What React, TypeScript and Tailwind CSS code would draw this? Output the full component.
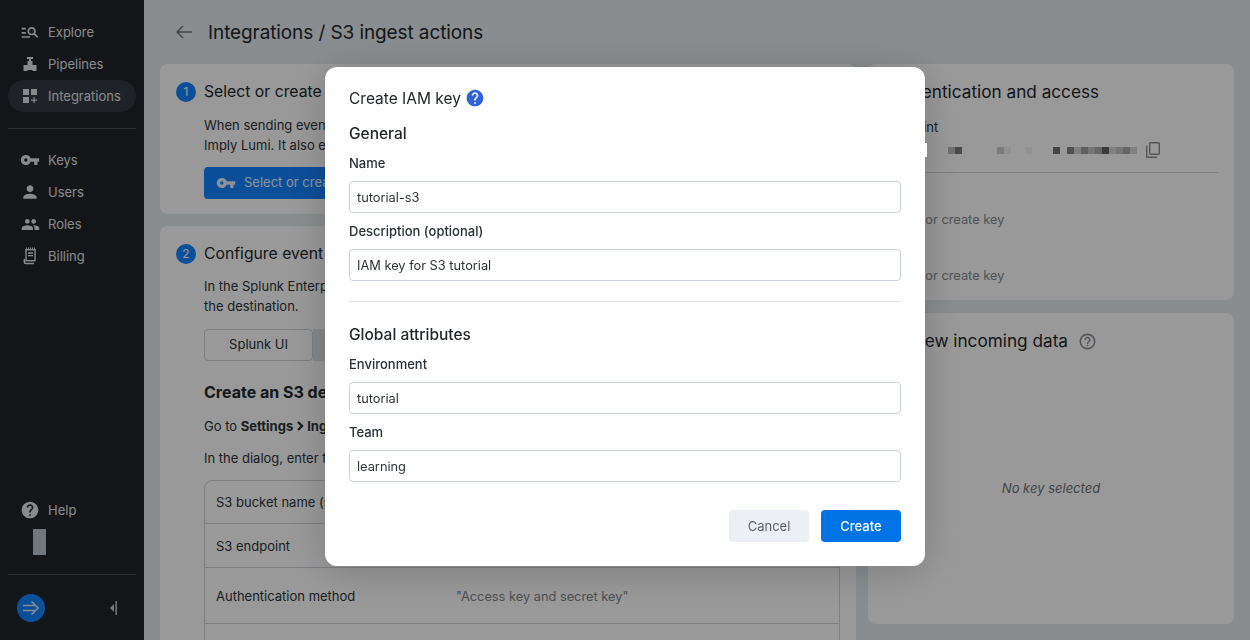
import React from 'react';
import { MdHelp, MdHelpOutline, MdManageSearch, MdPeople, MdPerson, MdVpnKey } from 'react-icons/md';

const PipelinesIcon = () => (
  <svg width="18" height="18" viewBox="0 0 18 18" fill="currentColor">
    <rect x="6" y="2" width="6" height="2" />
    <rect x="8" y="4" width="2" height="3" />
    <rect x="6.5" y="6" width="5" height="4.5" />
    <path d="M2.5 10h13v6h-13z" />
    <rect x="6.5" y="15" width="5" height="1" fill="#212429" />
  </svg>
);

const IntegrationsIcon = () => (
  <svg width="16" height="16" viewBox="0 0 16 16" fill="currentColor">
    <rect x="1" y="1" width="6" height="6" />
    <rect x="9" y="1" width="6" height="6" />
    <rect x="1" y="9" width="6" height="6" />
    <path d="M11.4 9h1.3v2.4H15v1.3h-2.3V15h-1.3v-2.3H9v-1.3h2.4z" />
  </svg>
);

const BillingIcon = () => (
  <svg width="14" height="18" viewBox="0 0 14 18" fill="none" stroke="currentColor">
    <path d="M3 1.2h9" strokeWidth="1.4" strokeDasharray="1 1" />
    <rect x="3" y="2.7" width="9" height="11" strokeWidth="1.4" />
    <path d="M5 6h5M5 8.6h5" strokeWidth="1.3" />
    <path d="M1.4 12v3.2q0 1.3 1.3 1.3H11" strokeWidth="1.6" />
  </svg>
);

const CopyIcon = () => (
  <svg width="14" height="16" viewBox="0 0 14 16" fill="none" stroke="currentColor" strokeWidth="1.4" className="text-[#8c9096]">
    <rect x="3.7" y="0.7" width="9.6" height="11.6" rx="1" />
    <path d="M0.7 3.5v11.8H11" />
  </svg>
);

const NavItem = ({ icon, label, active }: { icon: React.ReactNode; label: string; active?: boolean }) => (
  <div className={`h-8 rounded-2xl flex items-center pl-3 gap-2 ${active ? 'bg-[#343a40]' : ''}`}>
    <span className="w-5 h-5 flex items-center justify-center text-[#e2e5e8]">{icon}</span>
    <span className="pt-px text-[13px] text-[#e2e5e8]">{label}</span>
  </div>
);

const Sidebar = () => (
  <aside className="w-36 shrink-0 h-full bg-[#212429] flex flex-col px-2 pt-4">
    <NavItem icon={<MdManageSearch size={20} />} label="Explore" />
    <NavItem icon={<PipelinesIcon />} label="Pipelines" />
    <NavItem icon={<IntegrationsIcon />} label="Integrations" active />
    <div className="h-px bg-[#474e55] mt-4 mb-[15px]" />
    <NavItem icon={<MdVpnKey size={20} />} label="Keys" />
    <NavItem icon={<MdPerson size={20} />} label="Users" />
    <NavItem icon={<MdPeople size={19} />} label="Roles" />
    <NavItem icon={<BillingIcon />} label="Billing" />
    <div className="flex-1" />
    <NavItem icon={<MdHelp size={20} />} label="Help" />
    <div className="w-[13px] h-[26px] bg-[#bcc6d0] ml-[25px] mt-[3px]" />
    <div className="h-px bg-[#474e55] mt-[19px]" />
    <div className="h-[65px] flex items-center justify-between pl-[9px] pr-[19px]">
      <div className="w-7 h-7 rounded-full bg-[#1484ff] flex items-center justify-center text-[#e6e8ea]">
        <svg width="18" height="16" viewBox="0 0 18 16" fill="none" stroke="currentColor" strokeWidth="1.6">
          <path d="M1 5.5h13M1 10.5h13M9.5 1.5 16 8l-6.5 6.5" />
        </svg>
      </div>
      <svg width="7" height="14" viewBox="0 0 7 14" className="text-[#c4c8cc]" fill="currentColor">
        <path d="M4 3v8L0 7z" />
        <rect x="5.4" y="0" width="1.5" height="14" />
      </svg>
    </div>
  </aside>
);

const StepTitle = ({ n, title }: { n: number; title: string }) => (
  <div className="flex items-center gap-2">
    <span className="w-5 h-5 rounded-full bg-[#1484ff] text-white text-xs flex items-center justify-center">{n}</span>
    <h2 className="text-[15.75px] leading-6 text-[#23272c]">{title}</h2>
  </div>
);

const rows = [
  { k: 'S3 bucket name (see above)', v: 'lumi-ingest-bucket', h: 'h-[43px] pt-px' },
  { k: 'S3 endpoint', v: 's3.us-east-1.amazonaws.com', h: 'h-[44px] pt-[2px]' },
  { k: 'Authentication method', v: '"Access key and secret key"', h: 'h-[56px] pt-[2px]' },
  { k: 'Access key', v: 'Select or create key', h: 'h-[44px] pt-[2px]' },
];

const LeftColumn = () => (
  <div className="w-[696px] shrink-0 flex flex-col gap-3">
    <section className="h-[150px] bg-white rounded-lg px-4 pt-4">
      <StepTitle n={1} title="Select or create an IAM key" />
      <p className="ml-7 mt-[11px] text-[13px] leading-5 text-[#2e3338]">
        When sending events from Splunk, an IAM key authenticates the request and attributes the data to
        <br />
        Imply Lumi. It also enriches the events with the key's attributes.
      </p>
      <button className="ml-7 mt-3 h-8 px-3 rounded bg-[#1484ff] text-white/90 text-[13px] flex items-center gap-2">
        <MdVpnKey size={20} />
        Select or create IAM key
      </button>
    </section>
    <section className="h-[500px] bg-white rounded-t-lg px-4 pt-4">
      <StepTitle n={2} title="Configure event forwarding" />
      <div className="ml-7">
        <p className="mt-[10px] text-[13px] leading-5 text-[#2e3338]">
          In the Splunk Enterprise UI or configuration files, set the Imply Lumi S3 bucket details as
          <br />
          the destination.
        </p>
        <div className="flex mt-[13px] w-[320px]">
          <div className="w-[109px] h-8 border border-[#cdd5de] rounded flex items-center justify-center text-[13px] text-[#2e3338]">
            Splunk UI
          </div>
          <div className="flex-1 h-8 bg-[#e0e4e8]" />
        </div>
        <h3 className="mt-[19px] text-base leading-6 font-bold text-[#23272c]">Create an S3 destination</h3>
        <p className="mt-3 text-[13px] leading-5 text-[#2e3338] flex items-center">
          <span className="whitespace-pre">Go to </span>
          <b>Settings</b>
          <svg width="8" height="10" viewBox="0 0 8 10" fill="none" stroke="currentColor" strokeWidth="2.4" className="mx-[3px]">
            <path d="M2 1l4 4-4 4" />
          </svg>
          <b>Ingest Actions</b>
        </p>
        <p className="mt-3 text-[13px] leading-5 text-[#2e3338]">In the dialog, enter the following values:</p>
        <div className="mt-3 w-[636px] border border-[#cdd5de] rounded-t-lg">
          {rows.map((r) => (
            <div key={r.k} className={`${r.h} flex items-center pl-[11px] border-b border-[#cdd5de] text-[13px] text-[#2e3338]`}>
              <span className="w-[240px]">{r.k}</span>
              <span className="text-[12.8px] text-[#7f8489]">{r.v}</span>
            </div>
          ))}
        </div>
      </div>
    </section>
  </div>
);

const pixels = [
  { w: 'w-[7px]', c: 'bg-[#bbbbbb]' },
  { w: 'w-[7px]', c: 'bg-[#7b7b7b]' },
  { w: 'w-[35px]', c: 'bg-white' },
  { w: 'w-[7px]', c: 'bg-[#cdcdcd]' },
  { w: 'w-[7px]', c: 'bg-[#f0f0f0]' },
  { w: 'w-[14px]', c: 'bg-white' },
  { w: 'w-[7px]', c: 'bg-[#f4f4f4]' },
  { w: 'w-[21px]', c: 'bg-white' },
  { w: 'w-[7px]', c: 'bg-[#737373]' },
  { w: 'w-[7px]', c: 'bg-white' },
  { w: 'w-[7px]', c: 'bg-[#858585]' },
  { w: 'w-[7px]', c: 'bg-[#d5d5d5]' },
  { w: 'w-[7px]', c: 'bg-[#a0a0a0]' },
  { w: 'w-[7px]', c: 'bg-[#c3c3c3]' },
  { w: 'w-[7px]', c: 'bg-[#a8a8a8]' },
  { w: 'w-[7px]', c: 'bg-[#616161]' },
  { w: 'w-[7px]', c: 'bg-[#d5d5d5]' },
  { w: 'w-[7px]', c: 'bg-[#c3c3c3]' },
  { w: 'w-[7px]', c: 'bg-[#a8a8a8]' },
  { w: 'w-[7px]', c: 'bg-[#d5d5d5]' },
];

const RightColumn = () => (
  <div className="flex-1 flex flex-col gap-[13px]">
    <section className="h-[236px] bg-white rounded-lg px-4 pt-4">
      <h2 className="text-[17.2px] leading-6 text-[#23272c]">Authentication and access</h2>
      <p className="mt-[13px] text-[13px] leading-5 text-[#2e3338]">Endpoint</p>
      <div className="flex items-center h-[26px]">
        <div className="w-16 shrink-0" />
        <div className="flex items-center h-[7px]">
          {pixels.map((p, i) => (
            <div key={i} className={`${p.w} ${p.c} h-full`} />
          ))}
        </div>
        <div className="ml-[9px]">
          <CopyIcon />
        </div>
      </div>
      <div className="h-px bg-[#cdd5de] mt-[9px]" />
      <p className="mt-[37px] text-[12.8px] leading-5 text-[#858a90]">Select or create key</p>
      <p className="mt-9 text-[12.8px] leading-5 text-[#858a90]">Select or create key</p>
    </section>
    <section className="h-[311px] bg-white rounded-lg px-4 pt-4 flex flex-col">
      <div className="flex items-center gap-[10px]">
        <h2 className="text-[17.2px] leading-6 text-[#23272c]">Preview incoming data</h2>
        <MdHelpOutline size={19} className="text-[#8c9096]" />
      </div>
      <div className="flex-1 flex items-center justify-center">
        <span className="text-[13px] italic text-[#6f7378]">No key selected</span>
      </div>
    </section>
  </div>
);

const Field = ({ label, value }: { label: string; value: string }) => (
  <div>
    <label className="block text-[13px] leading-5 font-medium text-[#2a2f36] mb-2">{label}</label>
    <div className="h-8 border border-[#c9d0d9] rounded flex items-center px-[7px] pt-px text-[12.8px] text-[#2f343b]">
      {value}
    </div>
  </div>
);

const CreateKeyDialog = () => (
  <div className="fixed inset-0 bg-black/40 flex justify-center items-start pt-[67px]">
    <div className="w-[600px] h-[499px] bg-white rounded-xl shadow-[0_4px_40px_rgba(0,0,0,0.2)] px-6 pt-[21px]">
      <div className="flex items-center gap-1 h-[22px]">
        <h1 className="text-[15.5px] text-[#23272c]">Create IAM key</h1>
        <MdHelp size={20} className="text-[#2f63d9] -mt-[3px]" />
      </div>
      <h2 className="mt-[13px] text-[15.5px] leading-[22px] font-medium text-[#23272c]">General</h2>
      <div className="mt-2 flex flex-col gap-2">
        <Field label="Name" value="tutorial-s3" />
        <Field label="Description (optional)" value="IAM key for S3 tutorial" />
      </div>
      <div className="h-px bg-[#dfe3e8] mt-5" />
      <h2 className="mt-[22px] text-[15.5px] leading-[22px] font-medium text-[#23272c]">Global attributes</h2>
      <div className="mt-2 flex flex-col gap-2">
        <Field label="Environment" value="tutorial" />
        <Field label="Team" value="learning" />
      </div>
      <div className="mt-7 flex justify-end gap-3">
        <button className="w-20 h-8 pt-px rounded bg-[#eceff3] text-[13px] text-[#5c6268]">Cancel</button>
        <button className="w-20 h-8 pt-px rounded bg-[#0073e6] text-[13px] font-medium text-white">Create</button>
      </div>
    </div>
    {/* redaction sliver from the source shot, sits just past the dialog edge */}
    <div className="absolute left-[925px] top-[143px] w-[2px] h-[14px] bg-white" />
  </div>
);

export default function App() {
  return (
    <div className="relative h-[640px] w-[1250px] overflow-hidden flex bg-[#e6ebee] font-['Inter',sans-serif]">
      <Sidebar />
      <main className="flex-1 px-4 overflow-hidden">
        <header className="h-16 flex items-center gap-4 pl-4">
          <svg width="16" height="14" viewBox="0 0 16 14" fill="none" stroke="currentColor" strokeWidth="1.5" className="text-[#6f757b]">
            <path d="M16 7H1M7 1 1 7l6 6" />
          </svg>
          <h1 className="pt-[2px] text-[19px] tracking-[-0.1px] text-[#23272c]">Integrations / S3 ingest actions</h1>
        </header>
        <div className="flex gap-3">
          <LeftColumn />
          <RightColumn />
        </div>
      </main>
      <CreateKeyDialog />
    </div>
  );
}
